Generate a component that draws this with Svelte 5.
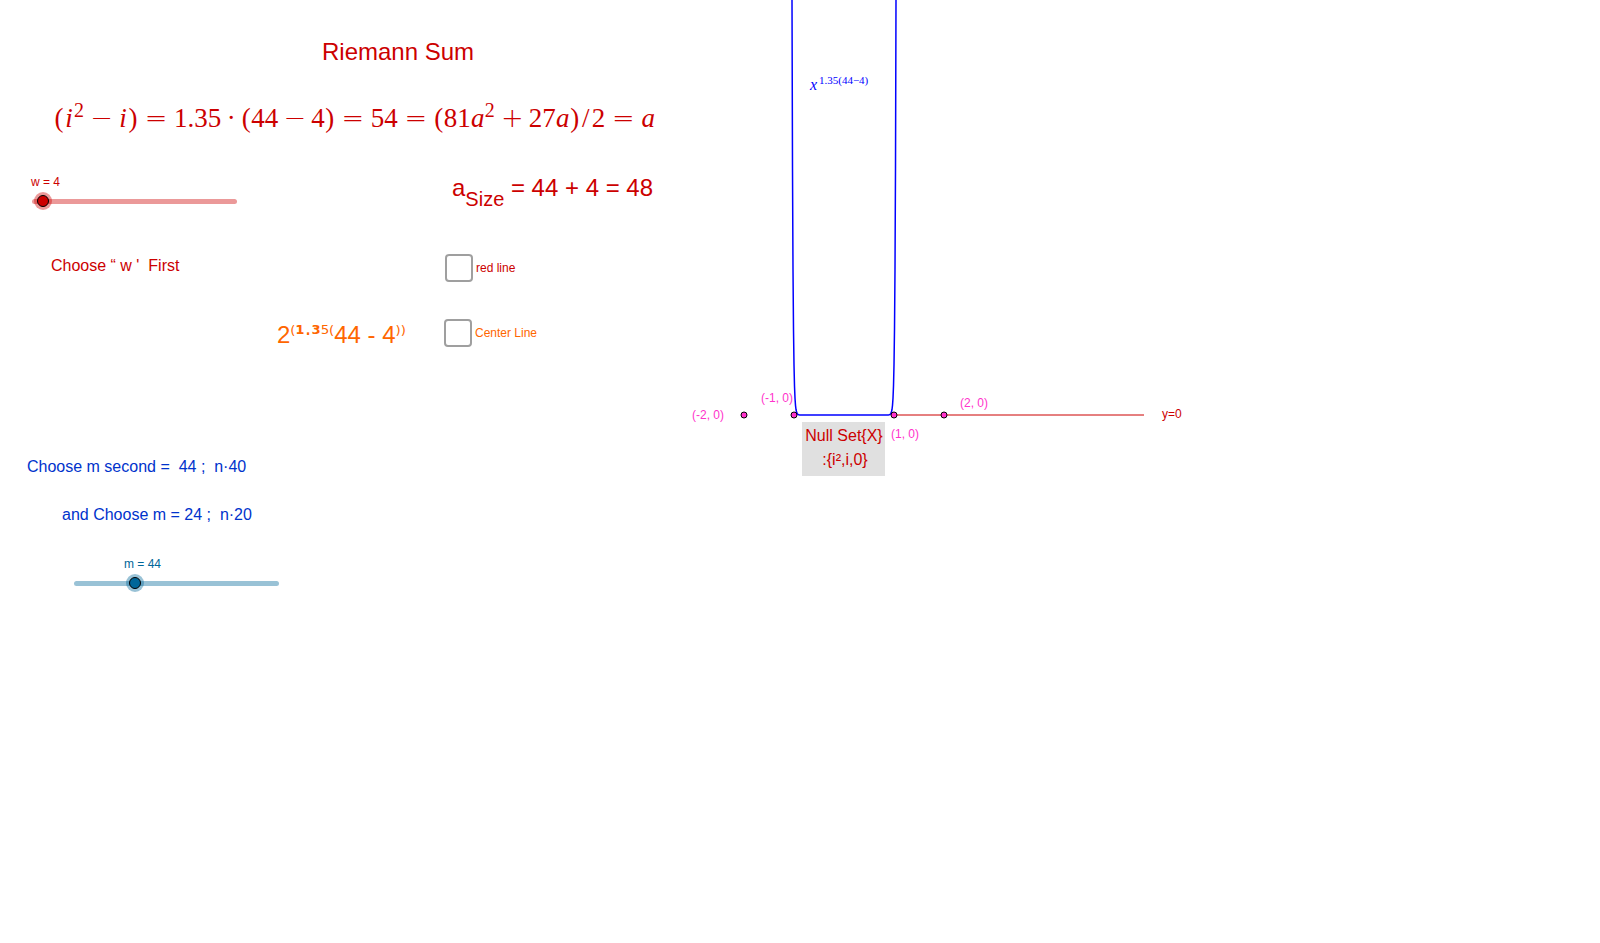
<script>
  let w = $state(4);
  let m = $state(44);
  let redLine = $state(false);
  let centerLine = $state(false);

  // Plot geometry: one unit is 50px, the origin sits at (164, 415).
  const unit = 50;
  const ox = 164;
  const oy = 415;
  const power = 54;

  function curve() {
    const pts = [];
    for (let i = -106; i <= 106; i++) {
      const x = i / 100;
      const y = oy - unit * Math.pow(Math.abs(x), power);
      pts.push(`${(ox + unit * x).toFixed(2)},${y.toFixed(2)}`);
    }
    return pts.join(' ');
  }

  const points = [
    { x: -2, label: '(-2, 0)', lx: 12, ly: 419 },
    { x: -1, label: '(-1, 0)', lx: 81, ly: 402 },
    { x: 1, label: '(1, 0)', lx: 211, ly: 438 },
    { x: 2, label: '(2, 0)', lx: 280, ly: 407 }
  ];
</script>

<main>
  <section class="notes">
    <h1>Riemann Sum</h1>

    <p class="formula">
      <span class="par">(</span><i class="ii">i</i><sup>2</sup><span class="bin">−</span><i class="ii">i</i><span class="par">)</span><span class="rel">=</span><span>1.35</span><span class="dot">·</span><span class="par">(</span><span>44</span><span class="bin">−</span><span>4</span><span class="par">)</span><span class="rel">=</span><span>54</span><span class="rel">=</span><span class="par">(</span><span>81</span><i class="ia">a</i><sup>2</sup><span class="bin">+</span><span>27</span><i class="ia">a</i><span class="par">)</span><span class="slash">/</span><span>2</span><span class="rel">=</span><i class="ia">a</i>
    </p>

    <div class="slider red">
      <label for="w">w = {w}</label>
      <input id="w" type="range" min="3" max="45" bind:value={w} />
    </div>
    <p class="size">a<sub>Size</sub> = 44 + 4 = 48</p>

    <p class="first">Choose “ w '&nbsp; First</p>
    <label class="check redtext"><input type="checkbox" bind:checked={redLine} />red line</label>

    <p class="power">2<span class="up">⁽<b>¹</b>·<b>³</b>⁵⁽</span>44 - 4<span class="up">⁾⁾</span></p>
    <label class="check orange"><input type="checkbox" bind:checked={centerLine} />Center Line</label>

    <p class="blue second">Choose m second =&nbsp; 44 ;&nbsp; n·40</p>
    <p class="blue third">and Choose m = 24 ;&nbsp; n·20</p>

    <div class="slider teal">
      <label for="m">m = {m}</label>
      <input id="m" type="range" min="20" max="104" bind:value={m} />
    </div>
  </section>

  <svg class="plot" role="img" aria-label="Graph">
    <line class="axis" x1={ox + unit} y1={oy} x2={ox + 6 * unit} y2={oy} />
    <polyline class="curve" points={curve()} />
    <rect class="box" x="122" y="422" width="83" height="54" />
    <text class="null" x="164" y="441">Null Set{'{X}'}</text>
    <text class="null" x="165" y="465">:{'{i²,i,0}'}</text>
    {#each points as p}
      <circle cx={ox + unit * p.x} cy={oy} r="3" />
      <text class="coord" x={p.lx} y={p.ly}>{p.label}</text>
    {/each}
    <text class="line-name" x="482" y="418">y=0</text>
    <text class="fn"><tspan class="base" x="130" y="90">x</tspan><tspan class="exp" x="139" y="84">1.35(44−4)</tspan></text>
  </svg>
</main>

<style>
  :global(body) {
    margin: 0;
    background: #fff;
  }
  main {
    display: grid;
    grid-template-columns: 680px 1fr;
    font-family: "Liberation Sans", Arial, sans-serif;
    overflow: hidden;
  }
  h1,
  p {
    margin: 0;
    font-weight: 400;
    white-space: nowrap;
  }
  .notes {
    display: grid;
    grid-template-columns: 444px 1fr;
    align-content: start;
    align-items: start;
    padding-top: 36px;
    color: #c00;
  }
  h1 {
    grid-column: 1 / -1;
    padding-left: 322px;
    font-size: 24px;
    line-height: 32px;
  }
  .formula {
    grid-column: 1 / -1;
    display: flex;
    align-items: baseline;
    margin-top: 32px;
    padding-left: 54px;
    font: 27px/36px "Liberation Serif", "Times New Roman", serif;
  }
  .formula sup {
    align-self: flex-start;
    width: 11px;
    font-size: 20px;
    line-height: 20px;
  }
  .par {
    width: 10px;
    text-align: center;
  }
  .ii {
    width: 10px;
    text-align: center;
  }
  .ia {
    width: 14px;
    text-align: center;
  }
  .slash {
    width: 12px;
    text-align: center;
  }
  .rel,
  .bin {
    width: 36px;
    font-family: "DejaVu Sans", sans-serif;
    font-weight: 200;
    line-height: 28px;
    text-align: center;
  }
  .bin {
    width: 33px;
  }
  .dot {
    width: 20px;
    text-align: center;
  }
  .slider {
    display: flex;
    flex-direction: column;
    gap: 1px;
    width: 207px;
    font-size: 12px;
    line-height: 16px;
  }
  .slider.red {
    --main: #c00;
    --soft: #cc000066;
    margin: 38px 0 0 31px;
  }
  .slider.teal {
    --main: #069;
    --soft: #00669966;
    grid-column: 1 / -1;
    margin: 29px 0 0 73px;
    color: #069;
  }
  .slider.teal label {
    padding-left: 51px;
  }
  .slider input {
    appearance: none;
    width: 205px;
    height: 20px;
    margin: 0 1px;
    background: none;
  }
  .slider input::-webkit-slider-runnable-track {
    height: 5px;
    border-radius: 3px;
    background: var(--soft);
  }
  .slider input::-webkit-slider-thumb {
    appearance: none;
    box-sizing: border-box;
    width: 12px;
    height: 12px;
    margin-top: -4px;
    border: 1px solid #000;
    border-radius: 50%;
    background: var(--main);
    box-shadow: 0 0 0 3px var(--soft);
  }
  .size {
    margin-top: 36px;
    padding-left: 8px;
    font-size: 24px;
    line-height: 32px;
  }
  .size sub {
    position: relative;
    top: 10px;
    font-size: 20px;
    line-height: 0;
    vertical-align: baseline;
  }
  .first {
    margin-top: 43px;
    padding-left: 51px;
    font-size: 16px;
    line-height: 24px;
  }
  .check {
    display: flex;
    align-items: center;
    gap: 3px;
    font-size: 12px;
    line-height: 28px;
  }
  .check input {
    appearance: none;
    box-sizing: border-box;
    width: 28px;
    height: 28px;
    margin: 0;
    border: 2px solid #9f9f9f;
    border-radius: 4px;
    background: #fff;
  }
  .check input:checked {
    background: #9f9f9f;
  }
  .redtext {
    margin-top: 43px;
    padding-left: 1px;
  }
  .orange {
    margin-top: 37px;
    color: #f60;
  }
  .power {
    margin-top: 37px;
    padding-left: 277px;
    color: #f60;
    font-size: 24px;
    line-height: 32px;
  }
  .up {
    font-family: "DejaVu Sans", sans-serif;
    font-size: 21px;
    line-height: 0;
    vertical-align: 2px;
  }
  .blue {
    grid-column: 1 / -1;
    color: #03c;
    font-size: 16px;
    line-height: 24px;
  }
  .second {
    margin-top: 104px;
    padding-left: 27px;
  }
  .third {
    margin-top: 24px;
    padding-left: 62px;
  }
  .plot {
    display: block;
    width: 100%;
    height: 620px;
  }
  .axis {
    stroke: #c00;
    stroke-width: 1;
  }
  .curve {
    fill: none;
    stroke: #00f;
    stroke-width: 1.5;
    stroke-linejoin: round;
  }
  .box {
    fill: #e0e0e0;
  }
  .null {
    fill: #c00;
    font-size: 16px;
    text-anchor: middle;
  }
  circle {
    fill: #f3c;
    stroke: #000;
    stroke-width: 1;
  }
  .coord {
    fill: #f3c;
    font-size: 12px;
  }
  .line-name {
    fill: #c00;
    font-size: 12px;
  }
  .fn {
    fill: #00f;
    font-family: "Liberation Serif", "Times New Roman", serif;
  }
  .base {
    font-size: 16px;
    font-style: italic;
  }
  .exp {
    font-size: 11px;
  }
</style>
